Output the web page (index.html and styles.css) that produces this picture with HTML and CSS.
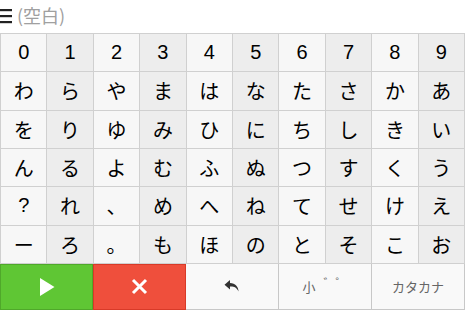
FILE: index.html
```html
<!DOCTYPE html>
<html lang="ja">
<head>
<meta charset="utf-8">
<link rel="stylesheet" href="styles.css">
</head>
<body>
<div class="app">
  <div class="header">
    <svg class="menu" width="12" height="16" viewBox="0 0 12 16"><rect x="0" y="1" width="12" height="2.2" fill="#222"/><rect x="0" y="7" width="12" height="2.2" fill="#222"/><rect x="0" y="13" width="12" height="2.2" fill="#222"/></svg>
    <span class="value">(空白)</span>
  </div>
  <div class="grid">
    <div class="k">0</div><div class="k d">1</div><div class="k">2</div><div class="k d">3</div><div class="k">4</div><div class="k d">5</div><div class="k">6</div><div class="k d">7</div><div class="k">8</div><div class="k d">9</div>
    <div class="k">わ</div><div class="k d">ら</div><div class="k">や</div><div class="k d">ま</div><div class="k">は</div><div class="k d">な</div><div class="k">た</div><div class="k d">さ</div><div class="k">か</div><div class="k d">あ</div>
    <div class="k">を</div><div class="k d">り</div><div class="k">ゆ</div><div class="k d">み</div><div class="k">ひ</div><div class="k d">に</div><div class="k">ち</div><div class="k d">し</div><div class="k">き</div><div class="k d">い</div>
    <div class="k">ん</div><div class="k d">る</div><div class="k">よ</div><div class="k d">む</div><div class="k">ふ</div><div class="k d">ぬ</div><div class="k">つ</div><div class="k d">す</div><div class="k">く</div><div class="k d">う</div>
    <div class="k">?</div><div class="k d">れ</div><div class="k">、</div><div class="k d">め</div><div class="k">へ</div><div class="k d">ね</div><div class="k">て</div><div class="k d">せ</div><div class="k">け</div><div class="k d">え</div>
    <div class="k">ー</div><div class="k d">ろ</div><div class="k">。</div><div class="k d">も</div><div class="k">ほ</div><div class="k d">の</div><div class="k">と</div><div class="k d">そ</div><div class="k">こ</div><div class="k d">お</div>
  </div>
  <div class="bar">
    <div class="btn go"><svg width="16" height="20" viewBox="0 0 16 20"><polygon points="1,1 15.5,10 1,19" fill="#fff"/></svg></div>
    <div class="btn del"><svg width="17" height="17" viewBox="0 0 17 17"><path d="M2 2 L15 15 M15 2 L2 15" stroke="#fff" stroke-width="3" stroke-linecap="butt"/></svg></div>
    <div class="btn plain"><svg width="16" height="14" viewBox="0 0 16 14"><path d="M6 1 L0.5 5.8 L6 10.6 L6 7.6 C10 7.4 12.6 8.6 14.6 12.6 C14.2 7.6 11.4 4.2 6 4.1 Z" fill="#333"/></svg></div>
    <div class="btn plain txt"><span>小</span><span class="dk">゛゜</span></div>
    <div class="btn plain txt">カタカナ</div>
  </div>
</div>
</body>
</html>
```

FILE: styles.css
```css
html, body {
  margin: 0;
  padding: 0;
  background: #fff;
}
.app {
  width: 465px;
  height: 310px;
  overflow: hidden;
  font-family: "Liberation Sans", "Noto Sans CJK JP", sans-serif;
}
.header {
  height: 33px;
  display: flex;
  align-items: center;
  gap: 5px;
  box-sizing: border-box;
}
.menu {
  display: block;
  margin-top: -2px;
}
.value {
  font-family: "Noto Sans CJK JP", sans-serif;
  font-size: 18px;
  color: #a0a0a0;
  line-height: 1;
  margin-top: -3px;
}
.grid {
  display: grid;
  grid-template-columns: repeat(10, 1fr);
  grid-template-rows: repeat(6, 38.33px);
  border-top: 1px solid #d0d0d0;
  border-left: 1px solid #d0d0d0;
  box-sizing: border-box;
  width: 465px;
}
.k {
  background: #f7f7f7;
  border-right: 1px solid #d0d0d0;
  border-bottom: 1px solid #d0d0d0;
  display: flex;
  align-items: center;
  justify-content: center;
  font-family: "Liberation Sans", "Noto Sans CJK JP", sans-serif;
  font-size: 20px;
  color: #000;
}
.k.d {
  background: #ededed;
}
.bar {
  display: grid;
  grid-template-columns: repeat(5, 1fr);
  height: 46px;
}
.btn {
  display: flex;
  align-items: center;
  justify-content: center;
  box-sizing: border-box;
}
.go {
  background: #5fc634;
  border: 1px solid #4fa82a;
}
.del {
  background: #ef4f3c;
  border: 1px solid #d83a28;
}
.plain {
  background: #f9f9f9;
  border-right: 1px solid #c8c8c8;
  border-bottom: 1px solid #c8c8c8;
}
.txt {
  font-family: "Noto Sans CJK JP", sans-serif;
  font-size: 13px;
  color: #666;
  gap: 8px;
}
.dk {
  font-size: 12px;
  margin-top: -8px;
}
```
